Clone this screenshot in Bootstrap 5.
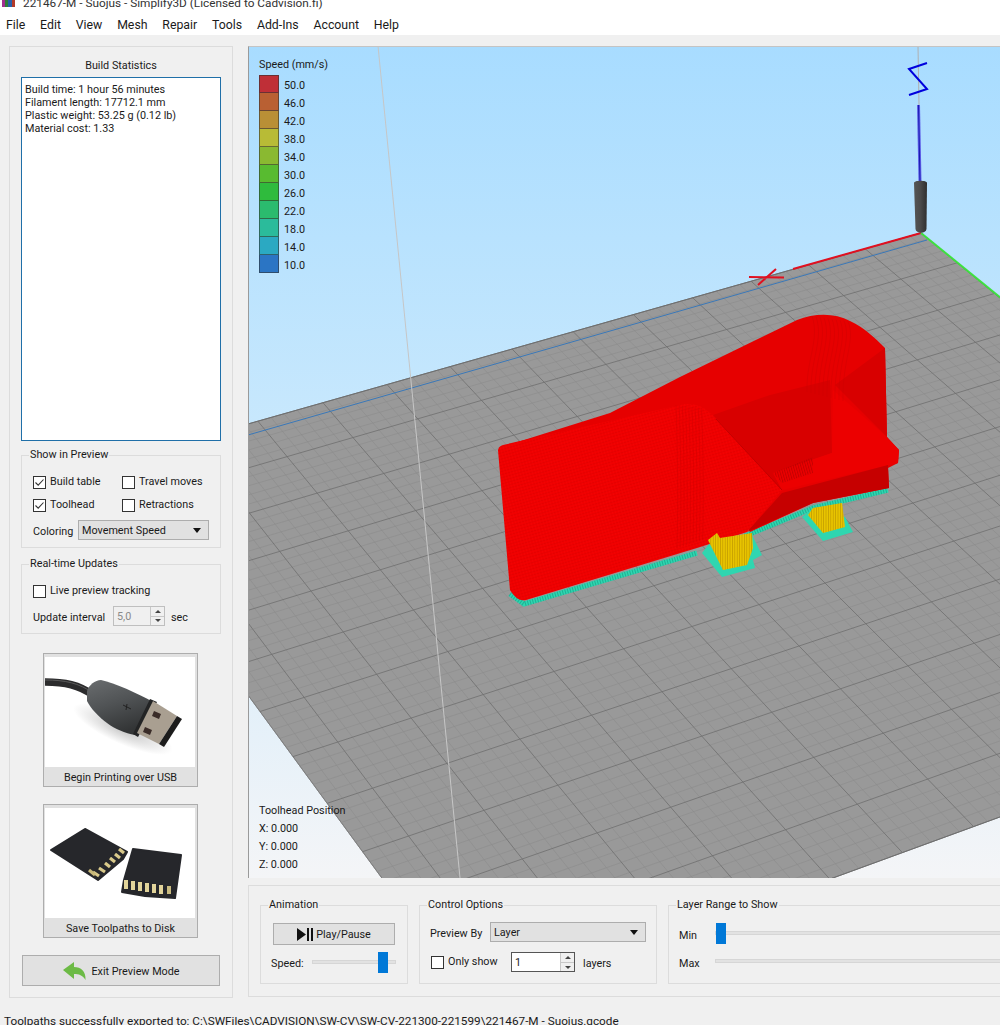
<!DOCTYPE html>
<html lang="en">
<head>
  <meta charset="UTF-8" />
  <title>221467-M - Suojus - Simplify3D</title>
  <link href="https://cdn.jsdelivr.net/npm/bootstrap@5.3.0/dist/css/bootstrap.min.css" rel="stylesheet" />
  <style>
    html, body { margin: 0; height: 1025px; overflow: hidden; background: #f0f0f0; }
    body, button, input, select { font-family: Roboto, "Open Sans", sans-serif; font-size: 10.8px; color: #1a1a1a; }
    .app-win { width: 1000px; height: 1025px; overflow: hidden; }
    .title-strip { height: 14px; background: #fff; overflow: hidden; padding-left: 2px; }
    .title-strip span { font-size: 11.8px; line-height: 14px; margin-top: -4px; color: #333; }
    .menu-strip { height: 21px; background: #fff; padding: 1px 0 0 6px; gap: 14.8px; font-size: 12.3px; line-height: 21px; }
    .main-row { margin: 11px 0 0 9px; height: 952px; gap: 15px; }
    .side-panel { width: 224px; height: 952px; border: 1px solid #dcdcdc; padding: 0 11px; }
    .stats-head { height: 30px; line-height: 38px; text-align: center; }
    .stats-box { height: 364px; border: 1px solid #1f6fa8; background: #fff; padding: 5px 3px; line-height: 13px; margin-bottom: 8px; }
    .grp { border: 1px solid #dcdcdc; margin: 0; min-width: 0; }
    .grp legend { float: none; width: auto; font-size: 10.8px; line-height: 12px; margin: 0 0 0 7px; padding: 0 1px; }
    .grp-show { height: 99px; padding: 0 11px; }
    .grp-live { height: 76px; padding: 0 11px; margin-top: 10px; }
    .grp-show legend, .grp-live legend { margin-left: -4px; }
    .ck-first { margin-top: 10px; }
    .ck { appearance: none; width: 13px; height: 13px; border: 1px solid #333; background: #fff; margin: 0 4px 0 0; flex: none; display: block; }
    .ck:checked { background: #fff url("data:image/svg+xml,%3Csvg xmlns='http://www.w3.org/2000/svg' viewBox='0 0 11 11'%3E%3Cpath d='M1.5 5.5 4.2 8.2 9.5 2.5' fill='none' stroke='%23333' stroke-width='1.1'/%3E%3C/svg%3E") center/11px no-repeat; }
    .ck-row { height: 23px; }
    .ck-cell { width: 89px; }
    .lbl-low { padding-top: 4px; }
    .lbl-lower { padding-top: 6px; }
    .win-select { height: 20px; background: #e1e1e1; border: 1px solid #adadad; padding: 0 3px; line-height: 18px; }
    .win-select span { padding-top: 2px; }
    .win-select i { width: 0; height: 0; border: 4px solid transparent; border-top: 5px solid #111; border-bottom: 0; margin-right: 4px; }
    .win-spin { height: 20px; border: 1px solid #adadad; background: #fff; padding-left: 3px; line-height: 20px; }
    .spin-arrows { width: 14px; height: 100%; border-left: 1px solid #c8c8c8; }
    .spin-arrows b { flex: 1; display: flex; align-items: center; justify-content: center; background: #f0f0f0; }
    .spin-arrows b + b { border-top: 1px solid #c8c8c8; }
    .spin-arrows b::after { content: ""; border: 3px solid transparent; border-bottom: 3px solid #444; border-top: 0; }
    .spin-arrows b + b::after { border-bottom: 0; border-top: 3px solid #444; }
    .spin-off { border-color: #bfbfbf; background: #f0f0f0; color: #8a8a8a; }
    .pic-btn { width: 155px; height: 134px; border: 1px solid #adadad; background: #e1e1e1; padding: 3px 1px 0; margin-left: 22px; text-align: center; display: block; }
    .pic-btn svg { display: block; width: 150px; height: 110px; background: #fff; }
    .pic-btn span { display: block; line-height: 21px; }
    .plain-btn { background: #e1e1e1; border: 1px solid #adadad; }
    .plain-btn span { padding-top: 3px; }
    .exit-btn { width: 198px; height: 31px; gap: 5px; margin: 17px 0 0 1px; }
    .right-col { width: 764px; }
    .view-3d { height: 832px; position: relative; overflow: hidden; flex: none; }
    .view-3d > svg { display: block; width: 752px; height: 832px; }
    .view-border { position: absolute; inset: 0; border-left: 1px solid #9a9a9a; border-top: 1px solid #c4c4c4; pointer-events: none; }
    .speed-legend { position: absolute; left: 11px; top: 12px; }
    .speed-legend p { margin: 0 0 3px; line-height: 14px; }
    .swatch-row { height: 18px; line-height: 21px; }
    .swatch-row i { width: 20px; height: 18px; margin-right: 5px; border: 1px solid rgba(50, 50, 50, .6); border-top-width: 0; display: block; }
    .swatch-row:first-of-type i { border-top-width: 1px; }
    .head-pos { position: absolute; left: 11px; top: 756px; line-height: 18px; }
    .bottom-panel { height: 112px; margin-top: 7px; border: 1px solid #dcdcdc; padding: 13px 11px 0; gap: 11px; flex: none; }
    .grp-anim { width: 148px; height: 85px; }
    .grp-ctrl { width: 238px; height: 85px; }
    .grp-range { width: 400px; height: 85px; }
    .grp-anim, .grp-ctrl, .grp-range { padding: 0; }
    .play-btn { width: 122px; height: 22px; margin: 12px 0 0 12px; gap: 3px; }
    .track { height: 4px; background: #e2e2e2; border: 1px solid #d6d6d6; position: relative; }
    .thumb { position: absolute; width: 10px; height: 21px; background: #0078d7; top: -9px; }
    .status-line { margin: 16px 0 0 4px; font-size: 11.75px; line-height: 14px; white-space: nowrap; }
  </style>
</head>
<body>
<div class="app-win d-flex flex-column">
  <div class="title-strip d-flex align-items-start gap-2 flex-shrink-0">
    <svg width="13" height="8" viewBox="0 0 13 8"><rect x="0" width="3" height="7" fill="#a12f8f"/><rect x="3" width="3" height="7" fill="#2f7d3a"/><rect x="6" width="4" height="7" fill="#2a5fa8"/><rect x="10" width="3" height="7" fill="#b33a2a"/></svg>
    <span class="d-block">221467-M - Suojus - Simplify3D (Licensed to Cadvision.fi)</span>
  </div>
  <div class="menu-strip d-flex flex-shrink-0">
    <span>File</span><span>Edit</span><span>View</span><span>Mesh</span><span>Repair</span><span>Tools</span><span>Add-Ins</span><span>Account</span><span>Help</span>
  </div>

  <div class="main-row d-flex flex-shrink-0">
    <div class="side-panel flex-shrink-0">
      <div class="stats-head">Build Statistics</div>
      <div class="stats-box">
        Build time: 1 hour 56 minutes<br>
        Filament length: 17712.1 mm<br>
        Plastic weight: 53.25 g (0.12 lb)<br>
        Material cost: 1.33
      </div>

      <fieldset class="grp grp-show">
        <legend>Show in Preview</legend>
        <div class="d-flex align-items-center ck-row ck-first">
          <label class="d-flex align-items-center ck-cell"><input class="ck" type="checkbox" checked>Build table</label>
          <label class="d-flex align-items-center"><input class="ck" type="checkbox">Travel moves</label>
        </div>
        <div class="d-flex align-items-center ck-row">
          <label class="d-flex align-items-center ck-cell"><input class="ck" type="checkbox" checked>Toolhead</label>
          <label class="d-flex align-items-center"><input class="ck" type="checkbox">Retractions</label>
        </div>
        <div class="d-flex align-items-center" style="margin-top:3px">
          <span class="lbl-low" style="width:45px">Coloring</span>
          <div class="win-select d-flex align-items-center justify-content-between" style="width:131px"><span>Movement Speed</span><i></i></div>
        </div>
      </fieldset>

      <fieldset class="grp grp-live">
        <legend>Real-time Updates</legend>
        <label class="d-flex align-items-center ck-row ck-first"><input class="ck" type="checkbox">Live preview tracking</label>
        <div class="d-flex align-items-center" style="margin-top:3px">
          <span class="lbl-low" style="width:80px">Update interval</span>
          <div class="win-spin spin-off d-flex justify-content-between" style="width:52px"><span>5,0</span><div class="spin-arrows d-flex flex-column"><b></b><b></b></div></div>
          <span class="lbl-low" style="margin-left:6px">sec</span>
        </div>
      </fieldset>

      <button class="pic-btn" type="button" style="margin-top:19px">
        <svg viewBox="0 0 150 110">
          <defs>
            <linearGradient id="usbBody" x1="0" y1="0" x2="0.4" y2="1"><stop offset="0" stop-color="#6a6d6f"/><stop offset=".5" stop-color="#505355"/><stop offset="1" stop-color="#333536"/></linearGradient>
            <radialGradient id="usbShadow"><stop offset="0" stop-color="#c4c4c4"/><stop offset="1" stop-color="#fff"/></radialGradient>
          </defs>
          <ellipse cx="78" cy="72" rx="54" ry="15" fill="url(#usbShadow)" transform="rotate(24 78 72)"/>
          <path d="M0 25C20 25 34 28 48 38" fill="none" stroke="#2b2b2c" stroke-width="7.500"/>
          <path d="M0 23C20 23 34 26 48 36" fill="none" stroke="#5a5a5a" stroke-width="1"/>
          <path d="M42 34C44 28 50 23 56 23 70 26 92 36 108 45L90 78C80 76 70 72 62 66 54 60 46 52 42 44Z" fill="url(#usbBody)"/>
          <path d="M105 42 112 45 93 80 88 77Z" fill="#232425"/>
          <path d="M108 44 132 59 114 87 92 76Z" fill="#a99f91"/>
          <path d="M132 59 137 62 119 90 114 87Z" fill="#1c1c1c"/>
          <path d="M109 54 116 57 114 62 107 59ZM100 70 107 73 105 78 98 75Z" fill="#3a2c28"/>
          <path d="M78 48 86 52M82 47 81 53" stroke="#222" stroke-width="1" fill="none"/>
        </svg>
        <span>Begin Printing over USB</span>
      </button>

      <button class="pic-btn" type="button" style="margin-top:17px">
        <svg viewBox="0 0 150 110">
          <path d="M40 21 82 44 78 51 53 72 6 42Z" fill="#26272b" stroke="#26272b" stroke-width="2" stroke-linejoin="round"/>
          <g stroke="#d9c98a" stroke-width="3.200">
            <path d="M48 64 54 68M54 60 60 64M60 55 65 59M65 50 70 54M70 46 75 50M74 41 79 45"/>
            <path d="M44 62 50 67" stroke="#c9b97a"/>
          </g>
          <path d="M88 41 136 47 130 90 100 88 77 84 79 72Z" fill="#26272b" stroke="#26272b" stroke-width="2" stroke-linejoin="round"/>
          <g stroke="#e2d49a" stroke-width="4">
            <path d="M81 72V81M88 73V82M95 74V83M102 75V84M109 76V85M116 77V86"/>
          </g>
          <path d="M124 78V86" stroke="#c9bb80" stroke-width="4"/>
        </svg>
        <span>Save Toolpaths to Disk</span>
      </button>

      <button class="plain-btn exit-btn d-flex align-items-center justify-content-center" type="button">
        <svg width="24" height="20" viewBox="0 0 24 20"><path d="M1 9 12 1V6C19 6 24 10 23.5 19 20.500 14 17 13 12 13V18Z" fill="#6cba45"/></svg>
        <span>Exit Preview Mode</span>
      </button>
    </div>

    <div class="right-col d-flex flex-column flex-shrink-0">
      <div class="view-3d">
        <svg viewBox="248 46 752 832" xmlns="http://www.w3.org/2000/svg">
          <defs>
            <linearGradient id="skyFill" x1="0" y1="0" x2="0" y2="1">
              <stop offset="0" stop-color="#a8dcff"/>
              <stop offset=".46" stop-color="#c8e8fd"/>
              <stop offset="1" stop-color="#f4f5f7"/>
            </linearGradient>
            <linearGradient id="headFill" x1="0" y1="0" x2="1" y2="0">
              <stop offset="0" stop-color="#555"/><stop offset=".5" stop-color="#4a4a4a"/><stop offset="1" stop-color="#2f2f2f"/>
            </linearGradient>
            <pattern id="layerTex" width="3" height="3" patternUnits="userSpaceOnUse" patternTransform="rotate(-16)">
              <rect width="3" height="1" fill="#b80000" opacity=".2"/>
              <rect width="1" height="3" fill="#ff1a1a" opacity=".12"/>
            </pattern>
            <pattern id="hatchTex" width="2.4" height="6" patternUnits="userSpaceOnUse" patternTransform="rotate(-16)">
              <rect width="1" height="6" fill="#9c0000"/>
            </pattern>
            <pattern id="supTex" width="2.4" height="4" patternUnits="userSpaceOnUse">
              <rect width=".8" height="4" fill="#b89000" opacity=".7"/>
            </pattern>
          </defs>

          <rect x="248" y="46" width="752" height="832" fill="url(#skyFill)"/>
          <polygon id="bedPoly" fill="#999999" stroke="#6e6e6e" stroke-width="1"/>
          <g id="bedGrid" fill="none"></g>

          <line x1="248" y1="435" x2="927" y2="240" stroke="#3a78b8" stroke-width="1"/>
          <line x1="793" y1="269" x2="921" y2="233" stroke="#e01020" stroke-width="2"/>
          <line x1="921" y1="233" x2="1001" y2="298" stroke="#3fe03f" stroke-width="2"/>
          <path d="M749 277 784 277.500M758 285 776 269" stroke="#e01020" stroke-width="2" fill="none"/>

          <line x1="378" y1="46" x2="460" y2="878" stroke="#c6c6c6" stroke-width="1"/>
          <line x1="918" y1="46" x2="919" y2="105" stroke="#b0b0b0" stroke-width="1"/>

          <path d="M927 63 909 69 927 89 909 95" fill="none" stroke="#0000dd" stroke-width="2"/>
          <line x1="918.500" y1="105" x2="920" y2="182" stroke="#5c5ce6" stroke-width="3"/>
          <line x1="918.500" y1="105" x2="920" y2="182" stroke="#1818b0" stroke-width="1"/>
          <path d="M914 183C914 180 927 180 927 183L926.500 229C926 234 916 234 915.500 229Z" fill="url(#headFill)"/>

          <!-- brim -->
          <path d="M510 594 524 604 697 553M745 536 813 508 888 490" fill="none" stroke="#2fd6b0" stroke-width="5"/>
          <path d="M510 594 524 604 697 553M745 536 813 508 888 490" fill="none" stroke="#14907c" stroke-width="5" stroke-dasharray="1 1.600" opacity=".55"/>
          <polygon points="702,553 722,577 755,568 753,560 762,555 752,535 712,540" fill="#2fd6b0"/>
          <polygon points="802,517 823,541 853,532 845,517 813,508" fill="#2fd6b0"/>

          <!-- model -->
          <path d="M498 448 610 413 680 377 797 320C815 313 835 313 850 321 865 328 875 338 885 348L887 437 899 450 898 463 888 468 889 488 813 503 750 532 713 440Z" fill="#e60000"/>
          <polygon points="713,415 770,395 830,380 832,453 773,473 782,490" fill="#d80000"/>
          <polygon points="835,385 885,348 887,437" fill="#d80000"/>
          <polygon points="833,390 887,437 899,450 898,463 782,490 773,473 832,453" fill="#ec0000"/>
          <polygon points="773,473 813,457 813,473 782,483" fill="url(#hatchTex)" opacity=".5"/>
          <polygon points="747,532 782,493 888,465 889,488 813,503" fill="#c60000"/>
          <path d="M498 450Q499 446 503 445L680 405Q695 402 705 409 711 413 716 419L782 490 747 532 697 548 526 600Q517 602 510 590Z" fill="#f00000"/>
          <path d="M498 450Q499 446 503 445L680 405Q695 402 705 409 711 413 716 419L782 490 747 532 697 548 526 600Q517 602 510 590Z" fill="url(#layerTex)"/>
          <g id="foldLines" fill="none" stroke="#c80000" stroke-width=".7" opacity=".5"></g>
          <line x1="716" y1="419" x2="782" y2="490" stroke="#b80000" stroke-width=".8"/>
          <polygon points="708,540 717,533 720,538 752,533 753,548 747,565 723,570" fill="#e8c400"/>
          <polygon points="708,540 717,533 720,538 752,533 753,548 747,565 723,570" fill="url(#supTex)"/>
          <polygon points="808,515 823,533 845,527 842,503 813,508" fill="#e8c400"/>
          <polygon points="808,515 823,533 845,527 842,503 813,508" fill="url(#supTex)"/>
        </svg>
        <div class="view-border"></div>

        <div class="speed-legend">
          <p>Speed (mm/s)</p>
          <div id="swatches"></div>
        </div>
        <div class="head-pos">Toolhead Position<br>X: 0.000<br>Y: 0.000<br>Z: 0.000</div>
      </div>

      <div class="bottom-panel d-flex">
        <fieldset class="grp grp-anim flex-shrink-0">
          <legend>Animation</legend>
          <button class="plain-btn play-btn d-flex align-items-center justify-content-center" type="button">
            <svg width="16" height="13" viewBox="0 0 16 13"><path d="M0 0 9 6.500 0 13ZM10 0H12V13H10ZM14 0H16V13H14Z" fill="#111"/></svg>
            <span>Play/Pause</span>
          </button>
          <div class="d-flex align-items-center" style="margin:7px 0 0 10px">
            <span class="lbl-low" style="width:41px">Speed:</span>
            <div class="track" style="width:84px"><div class="thumb" style="left:65px"></div></div>
          </div>
        </fieldset>

        <fieldset class="grp grp-ctrl flex-shrink-0">
          <legend>Control Options</legend>
          <div class="d-flex align-items-center" style="margin:11px 0 0 10px">
            <span class="lbl-low" style="width:60px">Preview By</span>
            <div class="win-select d-flex align-items-center justify-content-between" style="width:156px"><span>Layer</span><i></i></div>
          </div>
          <div class="d-flex align-items-center" style="margin:10px 0 0 11px">
            <input class="ck" type="checkbox"><span style="width:63px">Only show</span>
            <div class="win-spin d-flex justify-content-between" style="width:64px;border-color:#555"><span>1</span><div class="spin-arrows d-flex flex-column"><b></b><b></b></div></div>
            <span class="lbl-low ms-2">layers</span>
          </div>
        </fieldset>

        <fieldset class="grp grp-range flex-shrink-0">
          <legend>Layer Range to Show</legend>
          <div class="d-flex align-items-center" style="margin:11px 0 0 10px">
            <span class="lbl-lower" style="width:36px">Min</span>
            <div class="track flex-grow-1"><div class="thumb" style="left:0"></div></div>
          </div>
          <div class="d-flex align-items-center" style="margin:6px 0 0 10px">
            <span class="lbl-lower" style="width:36px">Max</span>
            <div class="track flex-grow-1"></div>
          </div>
        </fieldset>
      </div>
    </div>
  </div>

  <div class="status-line flex-shrink-0">Toolpaths successfully exported to: C:\SWFiles\CADVISION\SW-CV\SW-CV-221300-221599\221467-M - Suojus.gcode</div>
</div>

<script>
  // speed legend
  const speeds = [
    ['50.0', '#bf2f37'], ['46.0', '#b96033'], ['42.0', '#b98f36'], ['38.0', '#b8bb36'],
    ['34.0', '#8ab931'], ['30.0', '#58bb30'], ['26.0', '#2fbb3d'], ['22.0', '#2bbb6e'],
    ['18.0', '#2bbb9b'], ['14.0', '#2ba9c2'], ['10.0', '#2b75c4']
  ];
  document.getElementById('swatches').innerHTML = speeds.map(s =>
    `<div class="swatch-row d-flex"><i style="background:${s[1]}"></i><span>${s[0]}</span></div>`).join('');

  // bed grid: homography from the unit square onto the four bed corners
  const B = [83.7, 470.6], A = [921, 233], D = [1436.8, 657.4], C = [477, 1008];
  function makeH(p0, p1, p2, p3) {
    const dx1 = p1[0] - p2[0], dx2 = p3[0] - p2[0], sx = p0[0] - p1[0] + p2[0] - p3[0];
    const dy1 = p1[1] - p2[1], dy2 = p3[1] - p2[1], sy = p0[1] - p1[1] + p2[1] - p3[1];
    const den = dx1 * dy2 - dx2 * dy1;
    const g = (sx * dy2 - dx2 * sy) / den, h = (dx1 * sy - sx * dy1) / den;
    const a = p1[0] - p0[0] + g * p1[0], b = p3[0] - p0[0] + h * p3[0], c = p0[0];
    const d = p1[1] - p0[1] + g * p1[1], e = p3[1] - p0[1] + h * p3[1], f = p0[1];
    return (u, v) => {
      const w = g * u + h * v + 1;
      return [(a * u + b * v + c) / w, (d * u + e * v + f) / w];
    };
  }
  const H = makeH(B, A, D, C);
  document.getElementById('bedPoly').setAttribute('points', [B, A, D, C].map(p => p.join(',')).join(' '));

  // major cells counted from the back right corner, 5 minor per major
  const seg = (p, q) => `M${p[0].toFixed(1)} ${p[1].toFixed(1)}L${q[0].toFixed(1)} ${q[1].toFixed(1)}`;
  let minor = '', major = '';
  for (let k = 0; 1 - k / 68 >= 0; k++) {
    const u = 1 - k / 68, s = seg(H(u, 0), H(u, 1));
    if (k % 5 === 0) major += s; else minor += s;
  }
  for (let k = 0; k / 60 <= 1; k++) {
    const v = k / 60, s = seg(H(0, v), H(1, v));
    if (k % 5 === 0) major += s; else minor += s;
  }
  document.getElementById('bedGrid').innerHTML =
    `<path d="${minor}" stroke="#8c8c8c" stroke-width=".6"/><path d="${major}" stroke="#6e6e6e" stroke-width=".8"/>`;

  // printed layer ridges on the curved parts
  let fold = '';
  for (let i = 0; i < 9; i++) {
    const x = 676 + i * 3.2;
    fold += `M${x} ${405 + i * .4}C${x + 2} 460 ${x + 2} 510 ${x + 1} ${548 - i}`;
  }
  for (let i = 0; i < 10; i++) {
    const x = 812 + i * 4;
    fold += `M${x} ${316 + i * .6}C${x + 8} 340 ${x - 6} 360 ${x - 5} ${392 + i}`;
  }
  document.getElementById('foldLines').innerHTML = `<path d="${fold}"/>`;
</script>

<script src="https://cdn.jsdelivr.net/npm/bootstrap@5.3.0/dist/js/bootstrap.bundle.min.js"></script>
</body>
</html>
